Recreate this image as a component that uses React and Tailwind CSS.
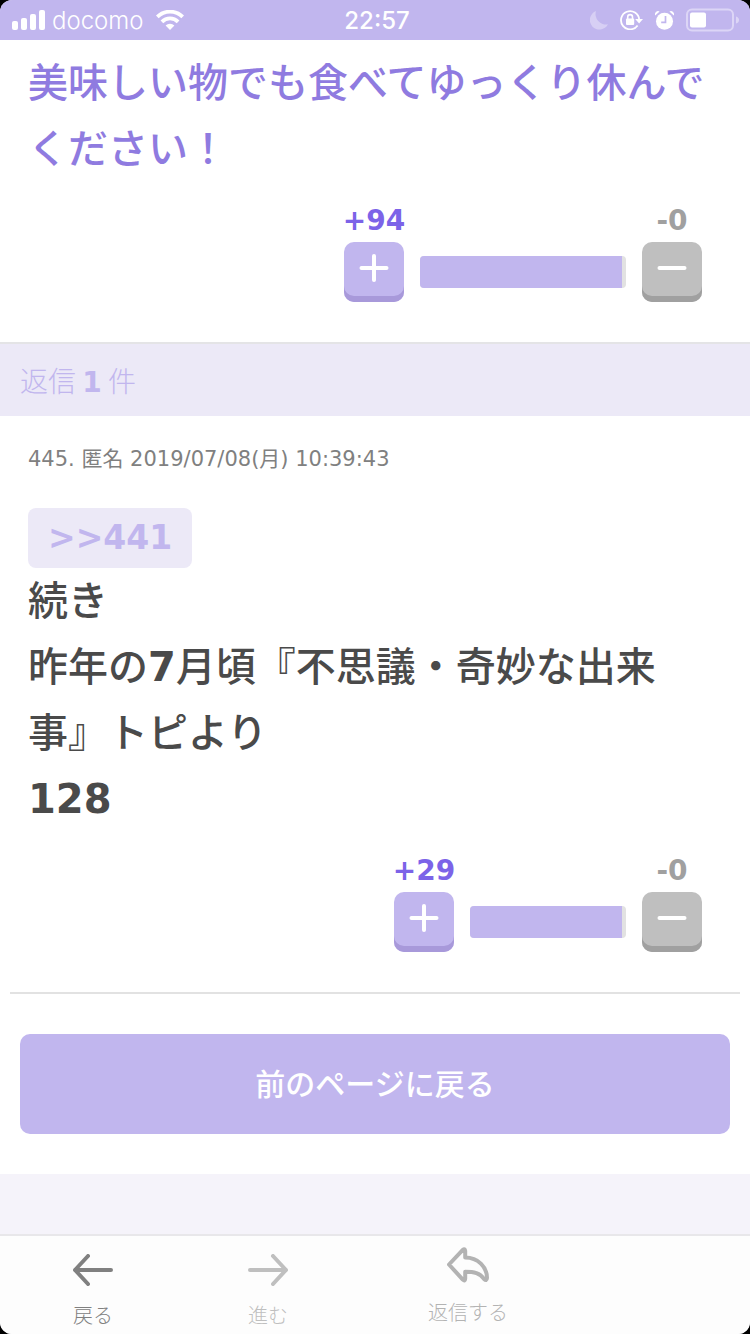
import clsx from 'clsx'

function SignalIcon() {
  return (
    <svg width="33" height="20" viewBox="0 0 33 20" fill="white" aria-hidden="true">
      <rect x="0" y="11" width="6" height="9" rx="2" />
      <rect x="9" y="8" width="6" height="12" rx="2" />
      <rect x="18" y="4" width="6" height="16" rx="2" />
      <rect x="27" y="0" width="6" height="20" rx="2" />
    </svg>
  )
}

function WifiIcon() {
  return (
    <svg width="28" height="20" viewBox="0 0 28 20" fill="none" stroke="white" strokeWidth="3.8" aria-hidden="true">
      <path d="M1.3 6.9a18 18 0 0 1 25.4 0" />
      <path d="M5.9 11.8a11.5 11.5 0 0 1 16.2 0" />
      <path d="M14 20l-4.4-4.5a6.3 6.3 0 0 1 8.8 0z" fill="white" stroke="none" />
    </svg>
  )
}

function MoonIcon() {
  return (
    <svg width="18" height="19" viewBox="0 0 18 19" fill="#d7cff4" aria-hidden="true">
      <path d="M6 0A9.6 9.6 0 1 0 18 13.3 A10.4 10.4 0 0 1 6 0z" />
    </svg>
  )
}

function RotationLockIcon() {
  return (
    <svg width="23" height="20" viewBox="0 0 23 20" fill="none" stroke="white" aria-hidden="true">
      <path d="M17.6 15.4A9.1 9.1 0 1 1 19.2 9.5" strokeWidth="1.8" />
      <path d="M15.2 9H23l-3.9 4.4z" fill="white" stroke="none" />
      <rect x="6" y="8.4" width="8.2" height="6.6" rx="1" fill="white" stroke="none" />
      <path d="M7.7 9V7a2.4 2.4 0 0 1 4.8 0v2" strokeWidth="1.6" />
    </svg>
  )
}

function AlarmIcon() {
  return (
    <svg width="19" height="19" viewBox="0 0 19 19" fill="white" aria-hidden="true">
      <circle cx="9.5" cy="10.3" r="8.5" />
      <path d="M0.2 4.6A3.2 3.2 0 0 1 4.6 0.5z" />
      <path d="M18.8 4.6A3.2 3.2 0 0 0 14.4 0.5z" />
      <path d="M10.5 5v6.4H6.2" fill="none" stroke="#c1b6ee" strokeWidth="1.7" />
    </svg>
  )
}

function BatteryIcon() {
  return (
    <svg width="53" height="24" viewBox="0 0 53 24" aria-hidden="true">
      <rect x="1" y="1.5" width="46" height="21" rx="5" fill="none" stroke="#dcd5f6" strokeWidth="2" />
      <rect x="4" y="4.5" width="16" height="15" rx="2" fill="white" />
      <path d="M50 8.5q3 1 3 3.5t-3 3.5z" fill="#dcd5f6" />
    </svg>
  )
}

function StatusBar() {
  return (
    <header className="grid h-10 grid-cols-[1fr_auto_1fr] items-center bg-[#c1b6ee] pr-[11px] pl-3 font-[Inter,sans-serif] text-2xl text-white">
      <div className="flex items-center">
        <SignalIcon />
        <span className="mr-3 ml-[7px] pt-[2px] font-light">docomo</span>
        <WifiIcon />
      </div>
      <time className="pt-[2px] pl-[3px] font-medium">22:57</time>
      <div className="flex items-center justify-end gap-3">
        <MoonIcon />
        <RotationLockIcon />
        <AlarmIcon />
        <BatteryIcon />
      </div>
    </header>
  )
}

function VoteButton({ minus, count }) {
  return (
    <div className="flex w-[60px] flex-col gap-[2px]">
      <span
        className={clsx(
          'flex justify-center text-[28px] leading-[38px] font-bold whitespace-nowrap',
          minus ? 'text-[#a0a0a0]' : 'text-[#7c63e8]'
        )}
      >
        {minus ? '-' : '+'}
        {count}
      </span>
      <button
        type="button"
        aria-label={minus ? 'マイナス' : 'プラス'}
        className={clsx(
          'flex h-[60px] justify-center rounded-[10px] pt-3',
          minus
            ? 'bg-[#bfbfbf] shadow-[inset_0_-6px_0_#a0a0a0]'
            : 'bg-[#c1b6ee] shadow-[inset_0_-6px_0_#a899da]'
        )}
      >
        <svg width="30" height="28" viewBox="0 0 30 28" fill="white" aria-hidden="true">
          <rect x="0.5" y="12" width="29" height="4" rx="2" />
          {!minus && <rect x="13" y="0" width="4" height="28" rx="2" />}
        </svg>
      </button>
    </div>
  )
}

function VoteRow({ plus, minus, wide }) {
  return (
    <div className="flex items-end justify-end gap-4 pt-5 pr-5 pb-10">
      <VoteButton count={plus} />
      <div className="flex h-[60px] items-center">
        <div
          className={clsx(
            'h-8 overflow-hidden rounded bg-[#e2e2e2] pr-1',
            wide ? 'w-[206px]' : 'w-[156px]'
          )}
        >
          <div className="h-full bg-[#c1b6ee]" />
        </div>
      </div>
      <VoteButton minus count={minus} />
    </div>
  )
}

function BackArrow() {
  return (
    <svg width="40" height="32" viewBox="0 0 40 32" fill="none" stroke="currentColor" strokeWidth="4" strokeLinecap="round" strokeLinejoin="round" aria-hidden="true">
      <path d="M38 16H2M15 2L2 16l13 14" />
    </svg>
  )
}

function ForwardArrow() {
  return (
    <svg width="40" height="32" viewBox="0 0 40 32" fill="none" stroke="currentColor" strokeWidth="4" strokeLinecap="round" strokeLinejoin="round" aria-hidden="true">
      <path d="M2 16h36M25 2l13 14-13 14" />
    </svg>
  )
}

function ReplyArrow() {
  return (
    <svg width="42" height="36" viewBox="0 0 42 36" fill="none" stroke="currentColor" strokeWidth="4" strokeLinejoin="round" aria-hidden="true">
      <path d="M2 17.5L15.8 2.8Q18 1.2 18.2 4V10.5C31 10.5 40 20 40 31Q39.8 34.5 37 32C33 26 27 24.8 18.2 24.8V31.5Q18 34.6 15.8 32.6Z" />
    </svg>
  )
}

function NavButton({ icon, label, className, disabled }) {
  return (
    <button
      type="button"
      disabled={disabled}
      className={clsx('flex flex-col items-center text-xl leading-7 font-light', className)}
    >
      {icon}
      {label}
    </button>
  )
}

export default function App() {
  return (
    <div className="bg-black">
      <div className="flex min-h-screen flex-col overflow-hidden rounded-xl bg-[#f5f3fa] font-['DejaVu_Sans','Noto_Sans_CJK_JP',sans-serif]" lang="ja">
        <StatusBar />

        <main className="bg-white pb-10">
          <article className="border-b-2 border-[#e4e4e6] px-7 pt-[10px]">
            <p className="text-[40px] leading-[66px] font-medium text-[#8f7be0]">
              美味しい物でも食べてゆっくり休んでください！
            </p>
            <VoteRow plus={94} minus={0} wide />
          </article>

          <h2 className="bg-[#ece9f7] px-5 font-['Noto_Sans_CJK_JP',sans-serif] text-[28px] leading-[72px] font-light text-[#c1b6ee]">
            返信 <b className="font-['DejaVu_Sans',sans-serif] leading-none font-bold">1</b> 件
          </h2>

          <article className="px-7 pt-7">
            <div className="text-[21px] leading-[30px] text-[#808080]">
              445. 匿名 2019/07/08(月) 10:39:43
            </div>
            <a
              href="#441"
              className="mt-[34px] block w-fit rounded-lg bg-[#ece9f7] px-5 text-[33px] leading-[60px] font-bold text-[#c1b6ee]"
            >
              &gt;&gt;441
            </a>
            <p className="text-[40px] leading-[66px] font-medium text-[#4a4a4a] [text-spacing-trim:space-all]">
              続き
              <br />
              昨年の<b className="font-bold">7</b>月頃『不思議・奇妙な出来事』トピより
              <br />
              <b className="font-bold">128</b>
            </p>
            <VoteRow plus={29} minus={0} />
          </article>

          <hr className="mx-[10px] border-t-2 border-[#e2e2e2]" />

          <div className="px-5 pt-10">
            <button type="button" className="h-[100px] w-full rounded-[10px] bg-[#c1b6ee] text-[30px] font-medium text-white">
              前のページに戻る
            </button>
          </div>
        </main>

        <div className="min-h-[60px] flex-1" />

        <nav className="grid h-[100px] grid-cols-[186fr_164fr_236fr_164fr] items-start border-t-2 border-[#e8e7ea] bg-[#fdfdfd]">
          <NavButton icon={<BackArrow />} label="戻る" className="gap-4 pt-[18px] text-[#808080]" />
          <NavButton icon={<ForwardArrow />} label="進む" className="gap-4 pt-[18px] text-[#bfbfbf]" disabled />
          <NavButton icon={<ReplyArrow />} label="返信する" className="gap-4 pt-[11px] text-[#b3b3b3]" />
        </nav>
      </div>
    </div>
  )
}
